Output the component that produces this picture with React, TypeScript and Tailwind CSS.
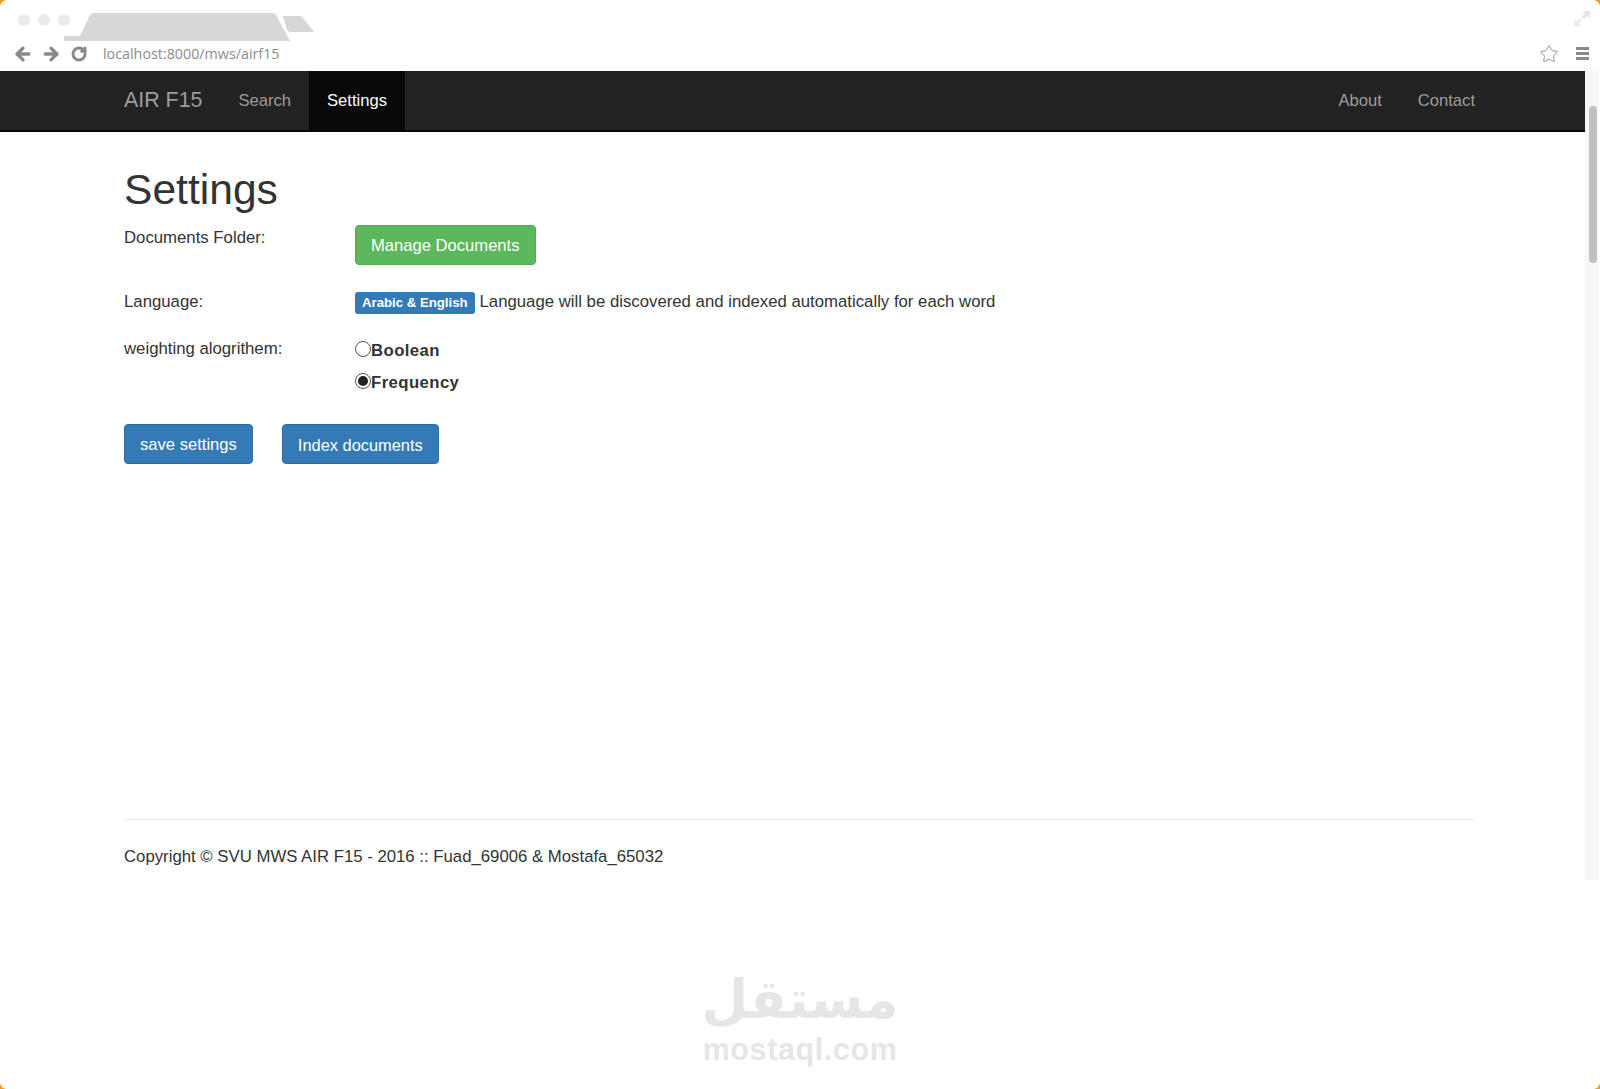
import { ArrowLeft, ArrowRight, RotateCw, Star } from "lucide-react";

function Corner({ className }: { className: string }) {
  return (
    <svg className={`absolute ${className}`} width="7" height="7" viewBox="0 0 7 7">
      <path d="M0 0H6Q1 1 0 6Z" fill="#f59a1f" />
    </svg>
  );
}

function BrowserChrome() {
  return (
    <div className="h-[71px] bg-white relative shrink-0">
      <div className="flex items-center h-[40px] pl-[18px] gap-[8px]">
        <div className="w-[12px] h-[12px] rounded-full bg-[#ebebeb]" />
        <div className="w-[12px] h-[12px] rounded-full bg-[#ebebeb]" />
        <div className="w-[12px] h-[12px] rounded-full bg-[#ebebeb]" />
      </div>
      {/* tab shapes */}
      <svg className="absolute left-[64px] top-[12px]" width="252" height="30" viewBox="0 0 252 30">
        <path d="M0 29V24H16L26 3Q27 1 30 1H208Q211 1 212 3L226 29Z" fill="#d8d7d8" />
        <path d="M219 4H236Q238 4 239 6L250 20H226Q224 20 223 18Z" fill="#d8d7d8" />
      </svg>
      <div className="flex items-center h-[31px] pl-[13px] -mt-[2px]">
        <ArrowLeft className="w-[20px] h-[20px] text-[#8a8a8a]" strokeWidth={4} />
        <ArrowRight className="w-[20px] h-[20px] text-[#8a8a8a] ml-[8px]" strokeWidth={4} />
        <RotateCw className="w-[16px] h-[16px] text-[#8a8a8a] ml-[10px]" strokeWidth={4.5} />
        <span className="ml-[16px] text-[14.3px] text-[#8c8c8c] font-['Open_Sans',sans-serif]">localhost:8000/mws/airf15</span>
        <Star className="w-[20px] h-[20px] text-[#8a8a8a] ml-auto" strokeWidth={1.1} />
        <div className="ml-[17px] mr-[11px] w-[13px] flex flex-col gap-[2px]">
          <div className="h-[3px] bg-[#8a8a8a]" />
          <div className="h-[3px] bg-[#8a8a8a]" />
          <div className="h-[3px] bg-[#8a8a8a]" />
        </div>
      </div>
      <svg className="absolute left-[1574px] top-[10px]" width="16" height="16" viewBox="0 0 16 16">
        <path d="M9 1H16V8L13.5 5.5L10 9L7.5 6.5L11 3.5Z" fill="#e4e4e4" />
        <path d="M0 16V9L2.5 11.5L6 8L8 10L5 13L7 16Z" fill="#ececec" />
      </svg>
    </div>
  );
}

function Navbar() {
  return (
    <nav className="h-[61px] bg-[#222222] border-b-2 border-b-[#080808] flex pl-[124px] pr-[110px] text-[16.6px]">
      <a className="text-[#9d9d9d] text-[21.4px] self-center mr-[18px]">AIR F15</a>
      <a className="px-[18px] pt-[2px] flex items-center text-[#9d9d9d]">Search</a>
      <a className="px-[18px] pt-[2px] flex items-center text-white bg-[#080808]">Settings</a>
      <div className="ml-auto flex">
        <a className="px-[18px] pt-[2px] flex items-center text-[#9d9d9d]">About</a>
        <a className="pl-[18px] pt-[2px] flex items-center text-[#9d9d9d]">Contact</a>
      </div>
    </nav>
  );
}

function Row({ label, children, className }: { label: string; children: React.ReactNode; className?: string }) {
  return (
    <div className={`flex ${className ?? ""}`}>
      <div className="w-[231px] shrink-0">{label}</div>
      <div>{children}</div>
    </div>
  );
}

function Radio({ label, checked }: { label: string; checked?: boolean }) {
  return (
    <label className="flex items-start h-[32px] font-bold tracking-[0.4px]">
      <span className="w-[16px] h-[16px] mt-[5px] rounded-full border border-[#555] flex items-center justify-center">
        {checked && <span className="w-[10px] h-[10px] rounded-full bg-[#222]" />}
      </span>
      <span className="mt-[2px]">{label}</span>
    </label>
  );
}

function SettingsPage() {
  return (
    <main className="pl-[124px] pr-[110px] text-[16.75px] leading-[26px] text-[#333333]">
      <h1 className="text-[42.6px] leading-[46px] mt-[34px] mb-[13px]">Settings</h1>
      <Row label="Documents Folder:" className="mb-[24px]">
        <button className="h-[40px] px-[15px] pt-[2px] rounded-[4px] bg-[#5cb85c] border border-[#4cae4c] text-white text-[16.6px]">Manage Documents</button>
      </Row>
      <Row label="Language:" className="mb-[21px]">
        <span className="inline-block bg-[#337ab7] text-white text-[13.2px] leading-[14px] font-bold px-[7px] py-[4px] rounded-[3px] mr-[5px]">Arabic &amp; English</span>
        Language will be discovered and indexed automatically for each word
      </Row>
      <Row label="weighting alogrithem:" className="mb-[24px]">
        <Radio label="Boolean" />
        <Radio label="Frequency" checked />
      </Row>
      <div className="flex gap-[29px]">
        <button className="h-[40px] px-[15px] pt-[2px] rounded-[4px] bg-[#337ab7] border border-[#2e6da4] text-white text-[16.6px]">save settings</button>
        <button className="h-[40px] px-[15px] pt-[2px] rounded-[4px] bg-[#337ab7] border border-[#2e6da4] text-white text-[16.4px]">Index documents</button>
      </div>
      <footer className="mt-[355px] border-t border-t-[#eeeeee] pt-[24px]">
        Copyright © SVU MWS AIR F15 - 2016 :: Fuad_69006 &amp; Mostafa_65032
      </footer>
    </main>
  );
}

export default function App() {
  return (
    <div className="h-[1089px] w-[1600px] bg-white overflow-hidden relative font-['Liberation_Sans',Arial,sans-serif]">
      <BrowserChrome />
      <div className="flex h-[809px]">
        <div className="w-[1585px]">
          <Navbar />
          <SettingsPage />
        </div>
        <div className="w-[13px] bg-[#f7f7f7] pt-[35px] pr-[1px] flex justify-end">
          <div className="w-[8px] h-[157px] rounded-full bg-[#c1c1c1]" />
        </div>
      </div>
      {/* watermark */}
      <div className="flex flex-col items-center mt-[93px] text-[#e6e6e6] font-bold">
        <div dir="rtl" lang="ar" className="text-[54px] leading-[54px] mb-[5px] font-['DejaVu_Sans',sans-serif]">مستقل</div>
        <div className="text-[30.5px] leading-[34px] tracking-[0.6px]">mostaql.com</div>
      </div>
      <Corner className="left-0 top-0" />
      <Corner className="right-0 top-0 rotate-90" />
      <Corner className="right-0 bottom-0 rotate-180" />
      <Corner className="left-0 bottom-0 -rotate-90" />
    </div>
  );
}
